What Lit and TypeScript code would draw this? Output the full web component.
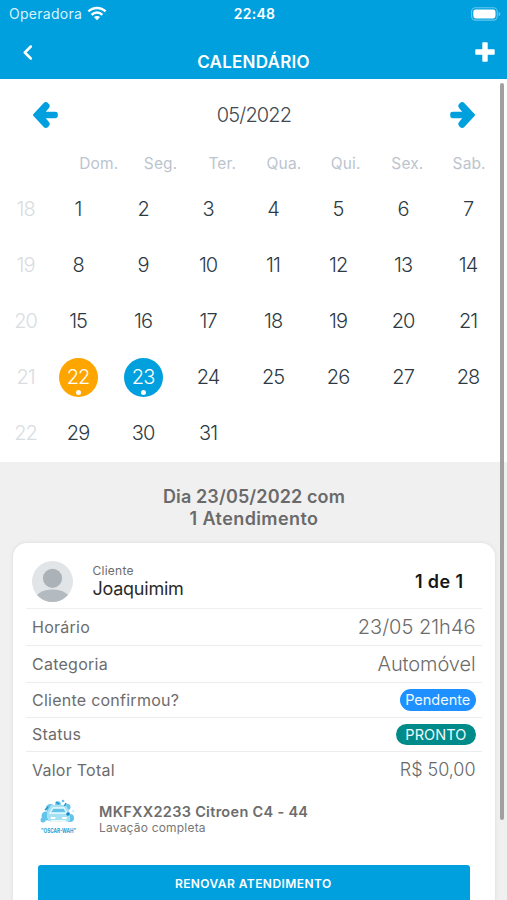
import { LitElement, html, css } from "lit";
import { customElement, property } from "lit/decorators.js";
import { classMap } from "lit/directives/class-map.js";

@customElement("status-bar")
class StatusBar extends LitElement {
  static styles = css`
    :host { display: grid; grid-template-columns: 1fr auto 1fr; align-items: center; height: 28px; padding: 0 6px 0 9px; box-sizing: border-box; color: #fff; }
    .carrier { display: flex; align-items: center; gap: 5px; font-size: 14px; line-height: 17px; letter-spacing: 0.27px; color: #d8f2fc; margin-top: -1px; }
    .time { font-size: 14px; font-weight: 600; letter-spacing: 0.3px; margin-left: -1px; margin-top: -1px; }
    .battery { justify-self: end; display: block; margin-top: -1px; }
    .wifi { display: block; }
  `;
  render() {
    return html`
      <span class="carrier">Operadora
        <svg class="wifi" width="20" height="15" viewBox="0 0 20 15" fill="none" stroke="#fff" stroke-width="2.4">
          <path d="M1.4 5.4C6.2 .8 13.8 .8 18.6 5.4" />
          <path d="M4.6 8.8C7.6 5.8 12.4 5.8 15.4 8.8" />
          <path d="M10 14.2L6.9 11.1C8.6 9.5 11.4 9.5 13.1 11.1Z" fill="#fff" stroke="none" />
        </svg>
      </span>
      <span class="time">22:48</span>
      <svg class="battery" width="30" height="14" viewBox="0 0 30 14">
        <rect x=".6" y=".7" width="25.6" height="12.4" rx="3.8" fill="none" stroke="#66c6ec" stroke-width="1.1" />
        <rect x="2.3" y="2.4" width="22.2" height="9" rx="2.3" fill="#fff" />
        <path d="M27.6 5V9C28.8 8.6 29.3 7.8 29.3 7S28.8 5.4 27.6 5Z" fill="#66c6ec" />
      </svg>`;
  }
}

@customElement("month-calendar")
class MonthCalendar extends LitElement {
  @property() month = "05/2022";
  static styles = css`
    :host { display: block; height: 383px; background: #fff; box-sizing: border-box; padding-top: 8px; }
    .nav { display: flex; justify-content: space-between; align-items: center; height: 56px; padding: 0 31px 0 32px; }
    .arrow { display: block; }
    .month { font-size: 20px; font-weight: 300; letter-spacing: -0.85px; color: #3f4a52; }
    .names { display: grid; grid-template-columns: repeat(7, 1fr); margin: 0 7px 0 68px; height: 38px; padding-top: 2px; box-sizing: border-box; align-items: center; text-align: center; font-size: 15.5px; letter-spacing: 0.15px; color: #bcc4ce; }
    .week { display: grid; grid-template-columns: 40px repeat(7, 65px); height: 56px; align-items: center; justify-items: center; padding-left: 5.6px; }
    .no, .day { font-size: 20px; font-weight: 300; letter-spacing: -0.9px; }
    .no { color: #d9dde1; }
    .day { display: flex; position: relative; align-items: center; justify-content: center; width: 39px; height: 39px; border-radius: 50%; color: #2d3a44; }
    .today { background: #ffa500; color: #fff; }
    .chosen { background: #00a0df; color: #fff; }
    .dot { position: absolute; left: 17px; bottom: 2px; width: 5px; height: 5px; border-radius: 50%; background: #fff; }
  `;
  private arrow(flip: boolean) {
    return html`<svg class="arrow" width="26" height="28" viewBox="0 0 26 28">
      <path transform=${flip ? "translate(26 0) scale(-1 1)" : ""} fill="#00a0df" stroke="#00a0df" stroke-width="2" stroke-linejoin="round"
        d="M2 14L12.200 3Q13.800 1.200 15.500 3L16 3.500Q17.400 5 16 6.500L11.500 11.800H23Q24.800 11.800 24.800 13.200V14.800Q24.800 16.200 23 16.200H11.500L16 21.500Q17.400 23 16 24.500L15.500 25Q13.800 26.800 12.200 25Z" />
    </svg>`;
  }
  render() {
    return html`
      <div class="nav">${this.arrow(false)}<span class="month">${this.month}</span>${this.arrow(true)}</div>
      <div class="names">${["Dom.", "Seg.", "Ter.", "Qua.", "Qui.", "Sex.", "Sab."].map((n) => html`<span>${n}</span>`)}</div>
      ${[0, 1, 2, 3, 4].map((w) => html`<div class="week">
        <span class="no">${18 + w}</span>
        ${[1, 2, 3, 4, 5, 6, 7].map((d) => w * 7 + d).filter((d) => d <= 31).map((d) => html`
          <span class=${classMap({ day: true, today: d === 22, chosen: d === 23 })}>${d}${d === 22 || d === 23 ? html`<i class="dot"></i>` : ""}</span>`)}
      </div>`)}`;
  }
}

@customElement("booking-card")
class BookingCard extends LitElement {
  static styles = css`
    :host { display: block; box-sizing: border-box; margin: 0 12.5px 0 13px; height: 400px; padding: 0 13px; background: #fff; border-radius: 14px; box-shadow: 0 0 4px rgba(0, 0, 0, 0.09); color: #6c6c6c; }
    .client { display: flex; align-items: center; height: 66px; padding: 12px 18px 0 6px; box-sizing: border-box; border-bottom: 1px solid #f0f0f0; }
    .avatar { display: block; width: 41px; height: 41px; }
    .who { flex: 1; display: flex; flex-direction: column; margin-left: 19.5px; }
    .label { font-size: 12px; line-height: 16px; letter-spacing: 0.25px; }
    .name { font-size: 18px; line-height: 20px; letter-spacing: -0.25px; color: #2b2b2b; }
    .count { font-size: 18px; font-weight: 600; letter-spacing: 0.4px; color: #161616; }
    .row { display: flex; align-items: center; justify-content: space-between; box-sizing: border-box; padding: 0 6px; font-size: 16px; letter-spacing: 0.25px; border-bottom: 1px solid #ececec; height: 34.6px; }
    .tall { height: 37.3px; }
    .last { border-bottom: 0; }
    .big { font-size: 20px; font-weight: 350; letter-spacing: 0px; color: #6c6c6c; }
    .tall .auto { letter-spacing: -0.1px; }
    .price { font-size: 18px; font-weight: 350; letter-spacing: -0.05px; color: #686868; }
    .pill { height: 21.5px; line-height: 21px; box-sizing: border-box; border-radius: 11px; padding: 0 5.2px; font-size: 14.5px; letter-spacing: 0px; color: #eefaff; background: #1e90ff; }
    .done { background: #008b8b; padding: 0 9px; letter-spacing: 0.1px; }
    .vehicle { display: flex; align-items: center; height: 60px; padding: 5px 0 0 12px; box-sizing: border-box; }
    .logo { display: block; }
    .info { display: flex; flex-direction: column; margin-left: 19px; }
    .plate { font-size: 14.5px; line-height: 17px; font-weight: 600; letter-spacing: 0.3px; }
    .service { font-size: 12px; line-height: 15px; letter-spacing: 0.2px; color: #777; }
    .renew { display: block; border: 0; margin: 18px 11px 0 11.5px; width: 432.5px; height: 40px; border-radius: 3px; background: #00a0df; color: #fff; font: 600 12px Inter, "Liberation Sans", sans-serif; letter-spacing: 0.43px; padding: 0 1px 2px 0; }
    .brand { font: 700 6px/8px Inter, sans-serif; fill: #229ed3; }
  `;
  private logo() {
    return html`<svg class="logo" width="42" height="42" viewBox="0 0 42 42" overflow="visible">
      <g transform="translate(1 1)">
      <g fill="#62c4e9">
        <circle cx="7" cy="17" r="4.5" /><circle cx="11.5" cy="9.5" r="4.5" /><circle cx="19" cy="5" r="2.800" />
        <circle cx="28.500" cy="8" r="3" /><circle cx="31" cy="19" r="4" />
        <circle cx="4" cy="21" r="2.5" /><circle cx="24" cy="2" r="1.300" />
      </g>
      <path d="M8 13L12 6H27L31 14V20L27 23H12L8 19Z" fill="#a9e0f4" />
      <path d="M11 14L14 9H25L28 14Z" fill="#62c4e9" stroke="#e9fbff" stroke-width="1.3" />
      <path d="M9 15H30L31 22H9Z" fill="#a5e1f5" />
      <path d="M12.500 19H15.500M24 19H27" stroke="#fff" stroke-width="2" stroke-linecap="round" />
      <path d="M12 22H27" stroke="#fff" stroke-width="1.500" />
      <path d="M6 11L9 8M17 3L20 5M27 4L25.500 7" stroke="#1795c6" stroke-width="1.5" />
      <circle cx="29" cy="15" r="1.800" fill="#1787c0" />
      <circle cx="34" cy="12" r=".7" fill="#8ccde5" />
      </g>
      <text class="brand" x="3" y="34.500" textLength="35" lengthAdjust="spacingAndGlyphs">"OSCAR-WAH"</text>
    </svg>`;
  }
  render() {
    return html`
      <div class="client">
        <svg class="avatar" viewBox="0 0 41 41">
          <defs><clipPath id="round"><circle cx="20.5" cy="20.5" r="20.5" /></clipPath></defs>
          <g clip-path="url(#round)">
            <rect width="41" height="41" fill="#e1e5e8" />
            <circle cx="20.5" cy="17.3" r="9.6" fill="#abb3b9" />
            <ellipse cx="20.5" cy="39.5" rx="18" ry="11" fill="#b4bbc0" />
          </g>
        </svg>
        <div class="who"><span class="label">Cliente</span><span class="name">Joaquimim</span></div>
        <span class="count">1 de 1</span>
      </div>
      <div class="row tall"><span>Horário</span><span class="big">23/05 21h46</span></div>
      <div class="row tall"><span>Categoria</span><span class="big auto">Automóvel</span></div>
      <div class="row"><span>Cliente confirmou?</span><span class="pill">Pendente</span></div>
      <div class="row"><span>Status</span><span class="pill done">PRONTO</span></div>
      <div class="row last"><span>Valor Total</span><span class="price">R$ 50,00</span></div>
      <div class="vehicle">${this.logo()}
        <div class="info"><span class="plate">MKFXX2233 Citroen C4 - 44</span><span class="service">Lavação completa</span></div>
      </div>
      <button class="renew">RENOVAR ATENDIMENTO</button>`;
  }
}

@customElement("app-root")
class AppRoot extends LitElement {
  static styles = css`
    :host { display: block; position: relative; width: 507px; height: 900px; overflow: hidden; background: #f0f0f0; font-family: Inter, "Liberation Sans", sans-serif; }
    .top { height: 79px; background: #00a0df; }
    .bar { display: grid; grid-template-columns: 1fr auto 1fr; height: 51px; padding: 0 12px 0 22px; color: #fff; }
    .back { display: block; margin-top: 15.5px; }
    .title { margin: 22px 0 0 -10px; font-size: 17px; line-height: 24px; font-weight: 600; letter-spacing: 0.25px; }
    .add { display: block; justify-self: end; margin-top: 14px; }
    .heading { height: 80.5px; box-sizing: border-box; padding: 24px 0 0 1px; text-align: center; font-size: 18px; line-height: 22px; font-weight: 600; letter-spacing: 0.13px; color: #6a6a6a; }
    .total { letter-spacing: 0.4px; }
    .scroll { position: absolute; right: 3.5px; top: 83px; width: 4px; height: 737px; border-radius: 2px; background: #a0a0a0; }
  `;
  render() {
    return html`
      <div class="top">
        <status-bar></status-bar>
        <div class="bar">
          <svg class="back" width="12" height="16" viewBox="0 0 12 16"><path d="M8.8 2.5L2.8 8.5L8.8 14.5" fill="none" stroke="#fff" stroke-width="2.5" stroke-linecap="round" stroke-linejoin="round" /></svg>
          <span class="title">CALENDÁRIO</span>
          <svg class="add" width="20" height="20" viewBox="0 0 20 20"><path d="M8 1H12V8H19V12H12V19H8V12H1V8H8Z" fill="#fff" stroke="#fff" stroke-width="1.400" stroke-linejoin="round" /></svg>
        </div>
      </div>
      <month-calendar></month-calendar>
      <div class="heading">Dia 23/05/2022 com<br /><span class="total">1 Atendimento</span></div>
      <booking-card></booking-card>
      <div class="scroll"></div>`;
  }
}
